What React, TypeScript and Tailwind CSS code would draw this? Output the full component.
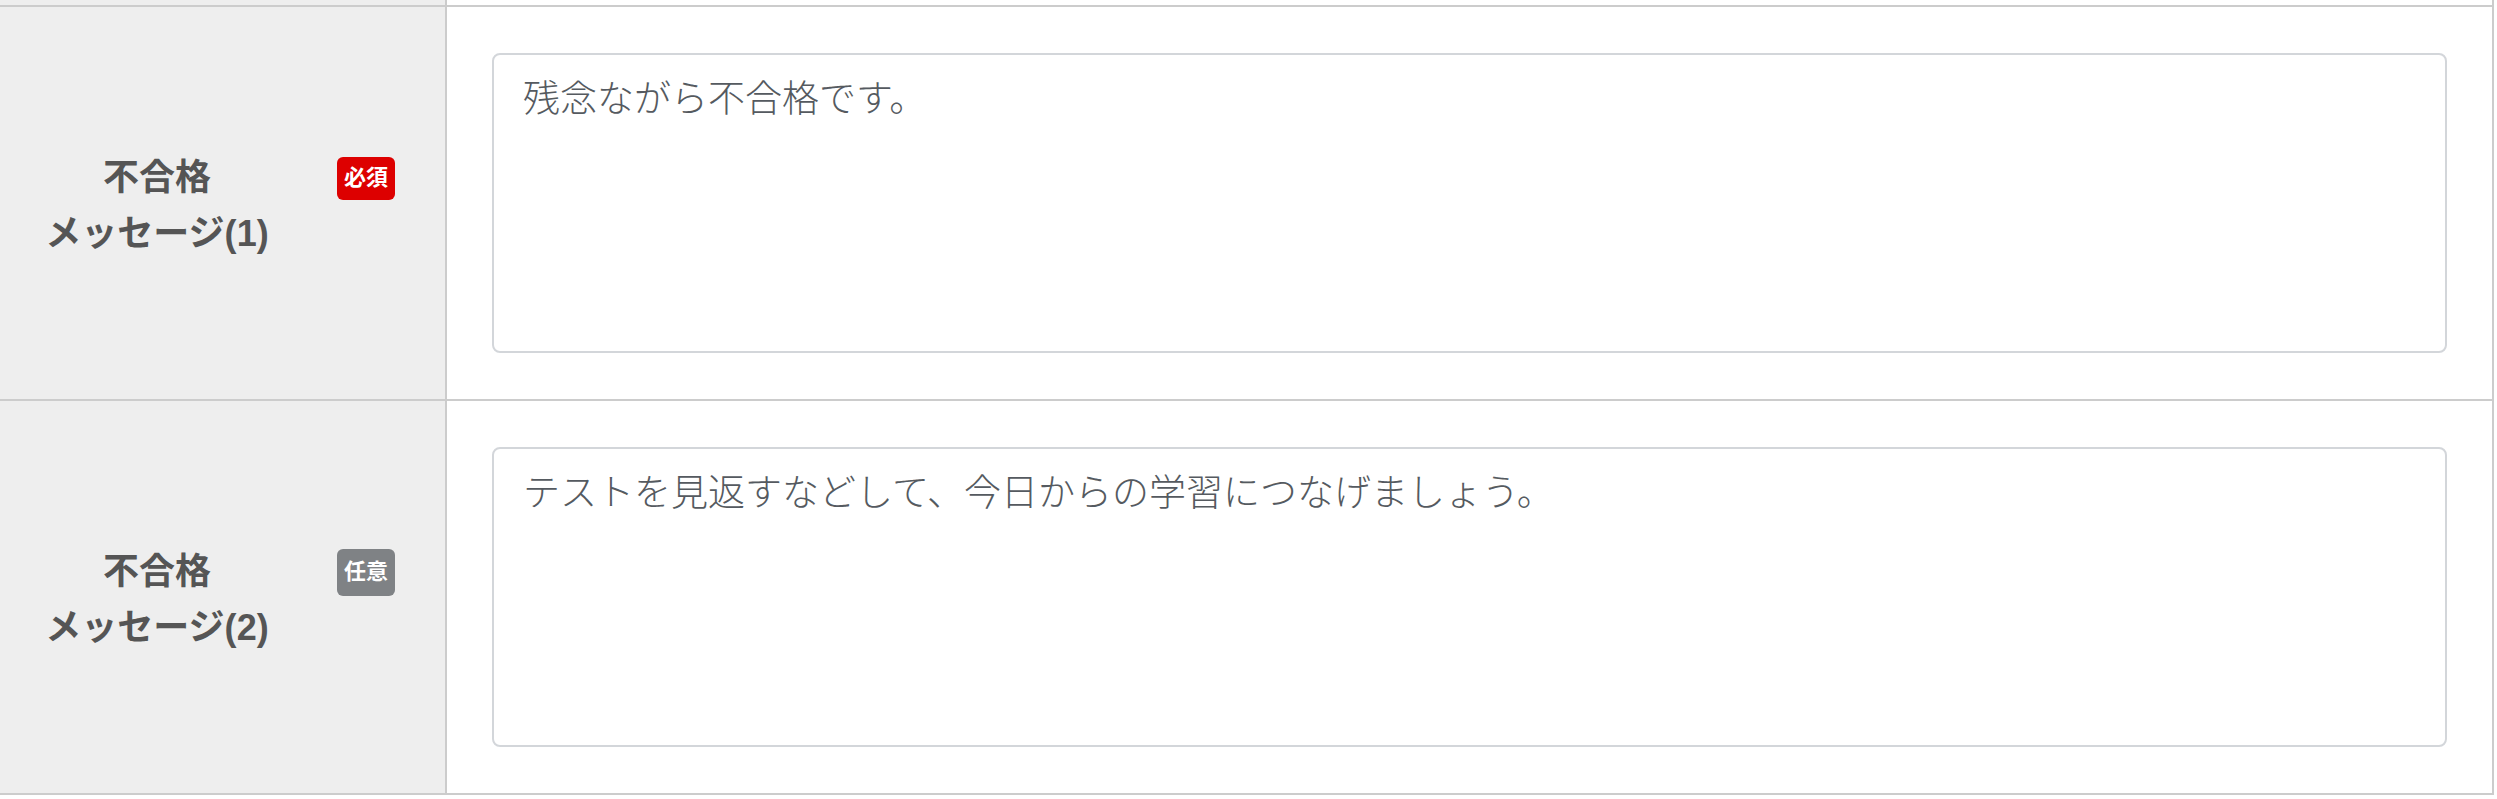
import React from 'react';

type Row = {
  id: number;
  required: boolean;
  value: string;
};

const rows: Row[] = [
  { id: 1, required: true, value: '残念ながら不合格です。' },
  { id: 2, required: false, value: 'テストを見返すなどして、今日からの学習につなげましょう。' },
];

const font = { fontFamily: '"Liberation Sans", "Noto Sans CJK JP", sans-serif' };

const Badge: React.FC<{ required: boolean }> = ({ required }) => (
  <span
    className={
      required
        ? 'flex h-[43px] w-[58px] items-center justify-center rounded-[6px] bg-[#dd0000] text-[22px] font-bold leading-none text-white'
        : 'flex h-[47px] w-[58px] items-center justify-center rounded-[6px] bg-[#7f8285] text-[22px] font-bold leading-none text-white'
    }
  >
    {required ? '必須' : '任意'}
  </span>
);

const MessageRow: React.FC<{ row: Row }> = ({ row }) => (
  <div className="flex border-t-2 border-[#cccccc]">
    <div className="flex w-[447px] shrink-0 items-center border-r-2 border-[#cccccc] bg-[#eeeeee] pt-[6px]">
      <div className="flex items-start">
        <div className="w-[314px] text-center text-[36px] font-bold leading-[56px] text-[#555555]">
          <div>不合格</div>
          <div>メッセージ({row.id})</div>
        </div>
        <div className="ml-[23px] flex h-[56px] items-center">
          <Badge required={row.required} />
        </div>
      </div>
    </div>
    <div className="flex-1 px-[45px] py-[46px]">
      <textarea
        defaultValue={row.value}
        className="block h-[300px] w-full resize-none rounded-[8px] border-2 border-[#d3d6da] bg-white px-[29px] py-[17px] text-[37px] font-light leading-[1.5] text-[#555a60] outline-none"
        style={font}
      />
    </div>
  </div>
);

export default function App() {
  return (
    <div className="min-h-[799px] bg-white" style={font}>
      <div className="w-[2494px] border-r-2 border-b-2 border-[#cccccc]">
        <div className="flex h-[5px]">
          <div className="w-[447px] shrink-0 border-r-2 border-[#cccccc] bg-[#eeeeee]" />
          <div className="flex-1" />
        </div>
        {rows.map((row) => (
          <MessageRow key={row.id} row={row} />
        ))}
      </div>
    </div>
  );
}
